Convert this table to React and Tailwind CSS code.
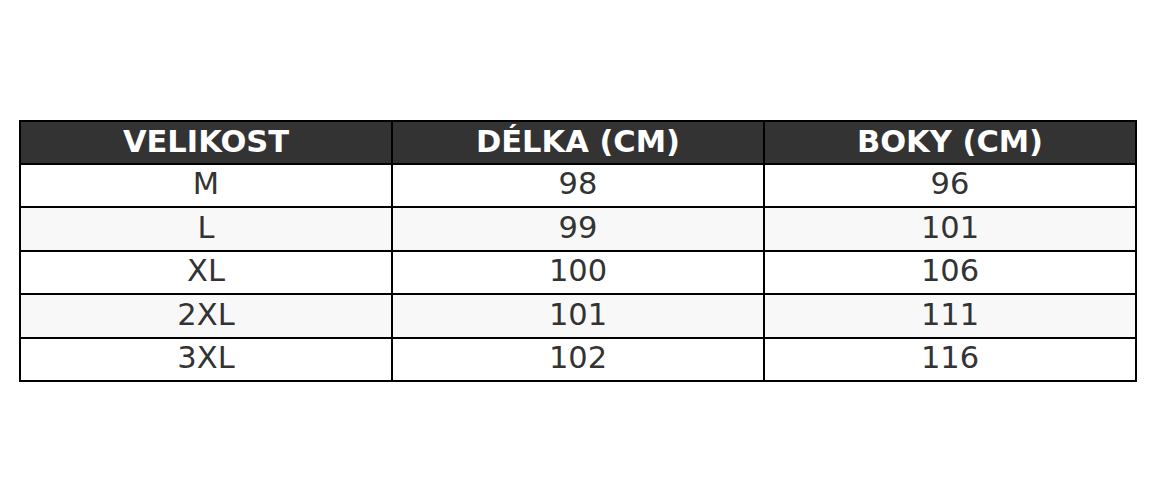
import React from 'react'

const rows = [
  ['M', '98', '96'],
  ['L', '99', '101'],
  ['XL', '100', '106'],
  ['2XL', '101', '111'],
  ['3XL', '102', '116'],
]

export default function App(){
return (
<div className="w-[1155px] h-[502px] bg-white pt-[120px] px-[19px]" style={{fontFamily: '"DejaVu Sans", sans-serif'}}>
<table className="w-[1118px] table-fixed border-collapse">
<thead>
<tr className="bg-[#333333] text-white h-[43px]">
<th className="border-2 border-black text-[30.5px] font-bold leading-none">VELIKOST</th>
<th className="border-2 border-black text-[30.5px] font-bold leading-none">DÉLKA (CM)</th>
<th className="border-2 border-black text-[30.5px] font-bold leading-none">BOKY (CM)</th>
</tr>
</thead>
<tbody>
{rows.map((r, i) => (
<tr key={i} className={(i % 2 ? 'bg-[#f8f8f8]' : 'bg-white') + ' h-[43.4px]'}>
{r.map((c, j) => (
<td key={j} className="border-2 border-black text-center text-[30.5px] leading-none text-[#333333] pb-[2px]">{c}</td>
))}
</tr>
))}
</tbody>
</table>
</div>
)
}
